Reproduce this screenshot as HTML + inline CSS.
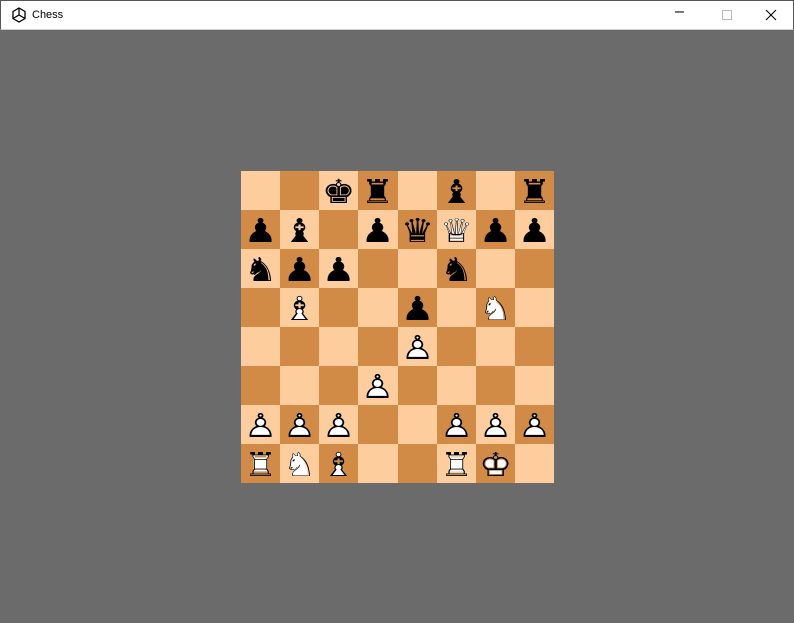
<!DOCTYPE html>
<html><head><meta charset="utf-8"><style>
*{margin:0;padding:0;box-sizing:border-box}
body{width:794px;height:623px;background:#6b6b6b;position:relative;overflow:hidden;font-family:"Liberation Sans",sans-serif}
#tb{position:absolute;left:0;top:0;width:794px;height:30px;background:#fff;border:1px solid #555;border-bottom:1px solid #ccc}
#tb .t{position:absolute;left:31px;top:8px;font-size:11px;color:#000}
#tb .ic{position:absolute;left:10px;top:6px}
#tb .b{position:absolute;top:4px;font-size:16px;color:#000}
#board{position:absolute;left:241px;top:171px;width:313px;height:312px;display:grid;grid-template-columns:repeat(8,1fr);grid-template-rows:repeat(8,1fr)}
.s{position:relative;font-family:"DejaVu Sans",sans-serif;font-size:33px;line-height:39px;text-align:center;color:#000}
.s>.p{display:block;transform:translateY(1px) scaleX(1.12)}
.l{background:#fecd9e}.d{background:#d18b47}
.w .p span{position:absolute;left:0;right:0;top:0}
.w .p .f{color:#fff}
.w .p{position:relative;height:39px}
</style></head><body>
<div id="tb">
<svg class="ic" width="16" height="16" viewBox="0 0 16 16"><path d="M8 1L14 4.5V11.5L8 15L2 11.5V4.5Z M8 1V8 M2 11.5L8 8L14 11.5" fill="none" stroke="#000" stroke-width="1.3"/></svg>
<div class="t">Chess</div>
<div class="b" style="left:674px;top:2px">&#8211;</div>
<div style="position:absolute;left:721px;top:9px;width:10px;height:10px;border:1px solid #bbb"></div>
<svg style="position:absolute;left:764px;top:8px" width="12" height="12"><path d="M1 1L11 11M11 1L1 11" stroke="#000" stroke-width="1.1"/></svg>
</div>
<div id="board"></div>
<script>
const b=[
"..kr.b.r",
"pb.pqQpp",
"npp..n..",
".B..p.N.",
"....P...",
"...P....",
"PPP..PPP",
"RNB..RK."];
const bl={k:"♚",q:"♛",r:"♜",b:"♝",n:"♞",p:"♟"};
const wo={k:"♔",q:"♕",r:"♖",b:"♗",n:"♘",p:"♙"};
let h="";
for(let r=0;r<8;r++)for(let c=0;c<8;c++){
 const ch=b[r][c];const cls=(r+c)%2?"d":"l";
 let inner="";let isW=false;
 if(ch!="."){
  if(ch===ch.toLowerCase()) inner='<span class="p">'+bl[ch]+'</span>';
  else {isW=true;const k=ch.toLowerCase();inner='<span class="p"><span class="f">'+bl[k]+'</span><span>'+wo[k]+'</span></span>';}
 }
 h+='<div class="s '+cls+(isW?' w':'')+'">'+inner+'</div>';
}
document.getElementById("board").innerHTML=h;
</script>
</body></html>
